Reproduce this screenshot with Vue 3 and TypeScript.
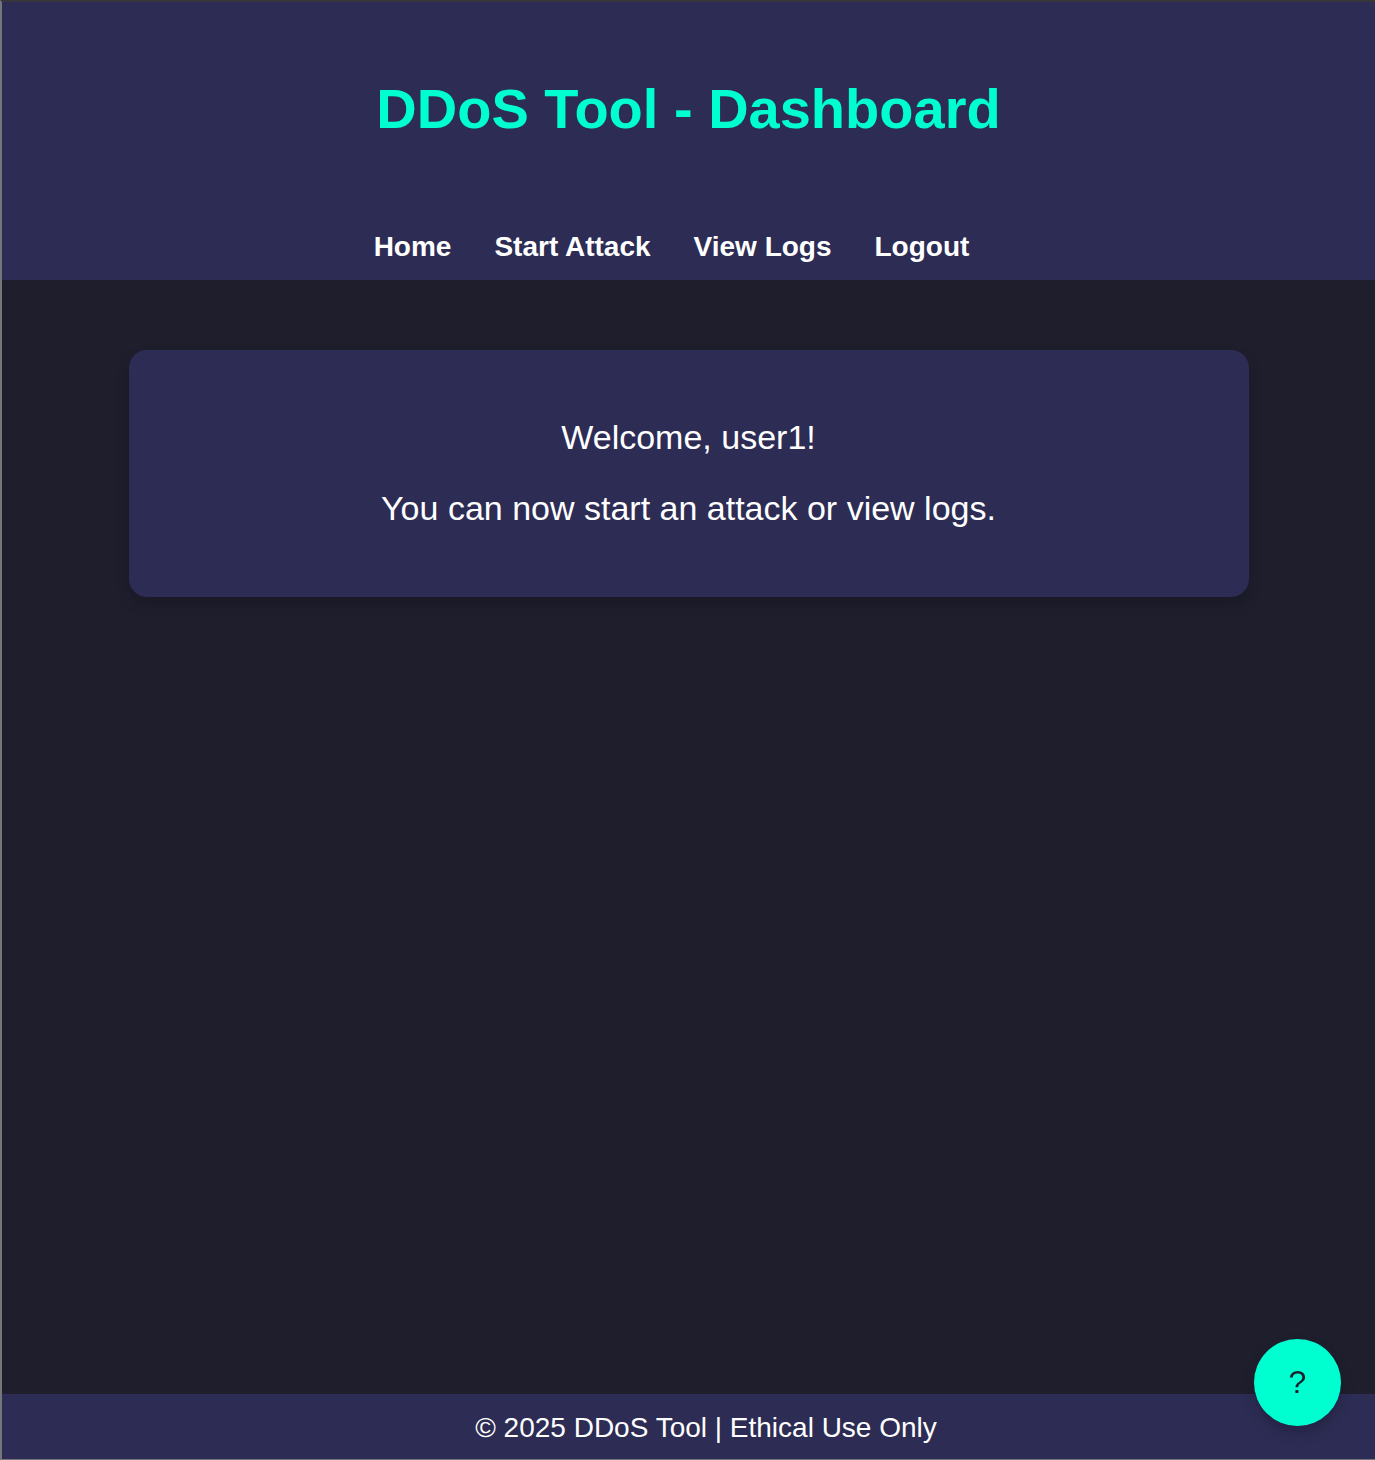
<script setup lang="ts">
interface NavLink {
  label: string
  href: string
}

const links: NavLink[] = [
  { label: 'Home', href: '#home' },
  { label: 'Start Attack', href: '#attack' },
  { label: 'View Logs', href: '#logs' },
  { label: 'Logout', href: '#logout' },
]

const username: string = 'user1'
</script>

<template>
  <div class="page">
    <header class="header">
      <h1 class="title">DDoS Tool - Dashboard</h1>
      <nav class="nav" aria-label="Main">
        <a v-for="link in links" :key="link.label" class="nav-link" :href="link.href">{{ link.label }}</a>
      </nav>
    </header>

    <main class="main">
      <section class="card">
        <p class="message">Welcome, {{ username }}!</p>
        <p class="message">You can now start an attack or view logs.</p>
      </section>
    </main>

    <footer class="footer">© 2025 DDoS Tool | Ethical Use Only</footer>

    <button class="help" type="button" aria-label="Help">?</button>
  </div>
</template>

<style>
body {
  margin: 0;
  background: #1f1e2d;
}
</style>

<style scoped>
.page {
  box-sizing: border-box;
  display: flex;
  flex-direction: column;
  min-height: 100vh;
  border-top: 2px solid #37373b;
  border-left: 2px solid #76767a;
  border-bottom: 1px solid #76767a;
  background: #1f1e2d;
  color: #fff;
  font-family: "Liberation Sans", Arial, sans-serif;
  font-size: 28px;
  line-height: 32px;
}

.header {
  padding: 75px 0 17px;
  background: #2d2c54;
  text-align: center;
}

.title {
  margin: 0;
  color: #00ffd0;
  font-size: 56px;
  font-weight: bold;
  line-height: 64px;
}

.nav {
  display: flex;
  justify-content: center;
  gap: 43px;
  margin-top: 90px;
  padding-right: 34px;
}

.nav-link {
  color: #fff;
  font-weight: bold;
  text-decoration: none;
}

.main {
  flex: 1;
  padding: 70px 35px;
}

.card {
  box-sizing: border-box;
  max-width: 1120px;
  margin: 0 auto;
  padding: 68px 35px 70px;
  border-radius: 18px;
  background: #2d2c54;
  box-shadow: 0 7px 14px rgba(0, 0, 0, 0.2);
  text-align: center;
}

.message {
  margin: 0;
  font-size: 34px;
  line-height: 38px;
}

.message + .message {
  margin-top: 33px;
}

.footer {
  padding: 18px 0 15px 35px;
  background: #2d2c54;
  text-align: center;
}

.help {
  position: fixed;
  right: 34px;
  bottom: 34px;
  width: 87px;
  height: 87px;
  padding: 0;
  border: 0;
  border-radius: 50%;
  background: #00ffd0;
  box-shadow: 0 7px 14px rgba(0, 0, 0, 0.2);
  color: #1f1e2d;
  font-family: "Liberation Sans", Arial, sans-serif;
  font-size: 32px;
  cursor: pointer;
}
</style>
